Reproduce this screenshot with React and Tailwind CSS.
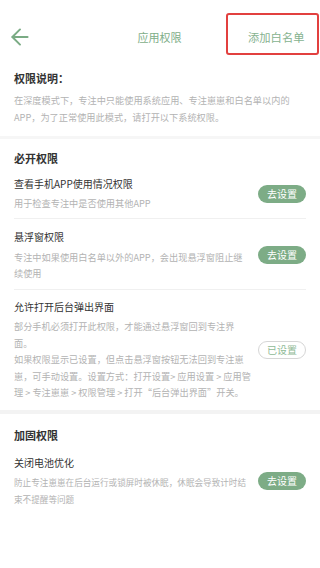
import { ArrowLeft } from "lucide-react";

const Btn = ({ done }) =>
  done ? (
    <button className="shrink-0 w-[48px] h-[18px] rounded-full border border-[#d6d6d6] text-[#8fba96] text-[10px] leading-none">
      已设置
    </button>
  ) : (
    <button className="shrink-0 w-[48px] h-[18px] rounded-full bg-[#7dac86] text-white text-[10px] leading-none">
      去设置
    </button>
  );

const Item = ({ title, lines, done, className = "", sub = "text-[9.2px]" }) => (
  <div className={`flex items-center justify-between pr-[14px] ${className}`}>
    <div className="w-[240px]">
      <div className="text-[10px] leading-[16px] text-[#333]">{title}</div>
      <div className={`mt-[3.5px] ${sub} leading-[16.5px] text-[#b3b3b3] whitespace-nowrap`}>
        {lines.map((l, i) => (
          <div key={i}>{l}</div>
        ))}
      </div>
    </div>
    <Btn done={done} />
  </div>
);

export default function App() {
  return (
    <div className="w-[320px] min-h-[568px] bg-white font-['Noto_Sans_CJK_SC',sans-serif]">
      <header className="flex items-stretch mt-[13px] h-[42px]">
        <div className="w-[93px] flex items-center pt-[6px] pl-[7px] text-[#7aab84]">
          <ArrowLeft size={26} strokeWidth={1.8} />
        </div>
        <div className="flex-1 flex items-center justify-center pt-[6px] text-[11px] text-[#7eae88]">
          应用权限
        </div>
        <div className="w-[93px] mr-[1px] border-2 border-[#e2403f] rounded-[3px] flex items-center pl-[20px] pt-[6px] text-[11.3px] text-[#86b28f]">
          添加白名单
        </div>
      </header>

      <section className="px-[14px] pt-[15px] pb-[10px]">
        <h2 className="text-[11px] leading-[16px] font-semibold text-[#333]">权限说明：</h2>
        <p className="mt-[5.5px] text-[9.2px] leading-[17px] text-[#b3b3b3] whitespace-nowrap">
          在深度模式下，专注中只能使用系统应用、专注崽崽和白名单以内的
          <br />
          APP，为了正常使用此模式，请打开以下系统权限。
        </p>
      </section>

      <div className="h-[3px] bg-[#f6f6f6]" />

      <section className="pl-[14px] pt-[11px] pb-[9px]">
        <h2 className="text-[11px] leading-[16px] font-semibold text-[#333]">必开权限</h2>
        <Item
          className="pt-[10px] pb-[6.5px]"
          title="查看手机APP使用情况权限"
          lines={["用于检查专注中是否使用其他APP"]}
        />
        <div className="h-px bg-[#f0f0f0] mr-[14px]" />
        <Item
          className="pt-[10px] pb-[7px]"
          title="悬浮窗权限"
          lines={["专注中如果使用白名单以外的APP，会出现悬浮窗阻止继", "续使用"]}
        />
        <div className="h-px bg-[#f0f0f0] mr-[14px]" />
        <Item
          className="pt-[9px]"
          done
          title="允许打开后台弹出界面"
          lines={[
            "部分手机必须打开此权限，才能通过悬浮窗回到专注界",
            "面。",
            "如果权限显示已设置，但点击悬浮窗按钮无法回到专注崽",
            "崽，可手动设置。设置方式：打开设置> 应用设置 > 应用管",
            "理 > 专注崽崽 > 权限管理 > 打开“后台弹出界面”开关。",
          ]}
        />
      </section>

      <div className="h-[4px] bg-[#f3f3f3]" />

      <section className="pl-[14px] pt-[13px] pb-[20px]">
        <h2 className="text-[11px] leading-[16px] font-semibold text-[#333]">加固权限</h2>
        <Item
          className="pt-[12px]"
          sub="text-[8.6px]"
          title="关闭电池优化"
          lines={["防止专注崽崽在后台运行或锁屏时被休眠，休眠会导致计时结", "束不提醒等问题"]}
        />
      </section>
    </div>
  );
}
